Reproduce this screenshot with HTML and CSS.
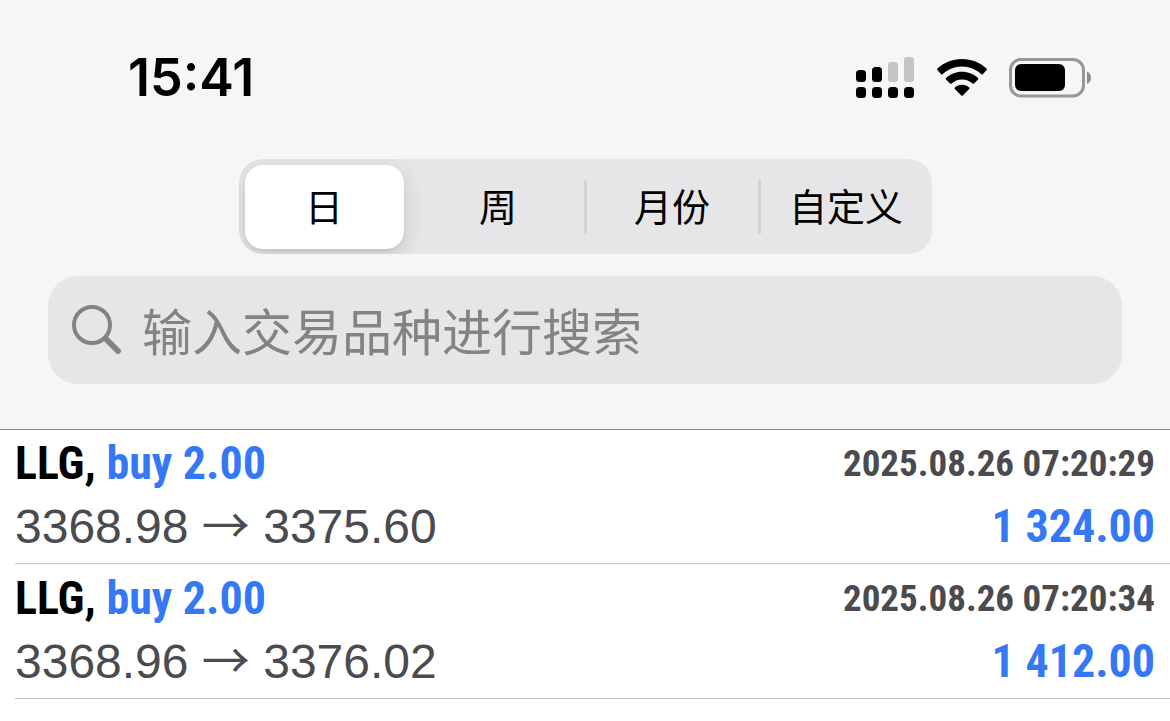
FILE: index.html
```html
<!DOCTYPE html>
<html lang="zh-CN">
<head>
<meta charset="utf-8">
<meta name="viewport" content="width=device-width, initial-scale=1">
<title>LLG</title>
<link rel="stylesheet" href="styles.css">
</head>
<body>
<header class="header">
  <div class="status">
    <time class="clock">15:41</time>
    <div class="status-icons">
      <svg class="signal" width="58" height="42" viewBox="0 0 58 42" aria-hidden="true">
        <rect x="0" y="13" width="10" height="12" rx="3.5"/>
        <rect x="16" y="10" width="10" height="15" rx="3.5"/>
        <rect class="signal-off" x="32" y="5" width="10" height="20" rx="3"/>
        <rect class="signal-off" x="48" y="0" width="10" height="25" rx="3"/>
        <rect x="0" y="30" width="10" height="11" rx="3.5"/>
        <rect x="16" y="30" width="10" height="11" rx="3.5"/>
        <rect x="32" y="30" width="10" height="11" rx="3.5"/>
        <rect x="48" y="30" width="10" height="11" rx="3.5"/>
      </svg>
      <svg class="wifi" width="50" height="38" viewBox="0 0 50 38" aria-hidden="true">
        <path d="M25 0C15.500 0 6.800 3.700 .4 9.600C0 10 0 10.600 .3 11L4.200 15.200C4.600 15.600 5.200 15.600 5.600 15.200C10.700 10.500 17.500 7.600 25 7.600S39.300 10.500 44.400 15.200C44.800 15.600 45.400 15.600 45.800 15.200L49.700 11C50 10.600 50 10 49.600 9.600C43.200 3.700 34.500 0 25 0Z"/>
        <path d="M25 12.800C18.800 12.800 13.200 15.200 9 19C8.600 19.400 8.600 20 9 20.400L13 24.500C13.400 24.900 14 24.900 14.400 24.500C17.200 22 20.900 20.400 25 20.400S32.800 22 35.600 24.500C36 24.900 36.600 24.900 37 24.500L41 20.400C41.400 20 41.400 19.400 41 19C36.800 15.200 31.200 12.800 25 12.800Z"/>
        <path d="M25 25.800C22.200 25.800 19.700 26.800 17.800 28.500C17.400 28.900 17.400 29.500 17.800 29.900L24.300 36.500C24.700 36.900 25.300 36.900 25.700 36.500L32.200 29.900C32.600 29.500 32.600 28.900 32.200 28.500C30.300 26.800 27.800 25.800 25 25.800Z"/>
      </svg>
      <svg class="battery" width="83" height="40" viewBox="0 0 83 40" aria-hidden="true">
        <rect class="battery-case" x="1.500" y="1.500" width="73" height="36.500" rx="10.500"/>
        <rect x="6" y="6" width="50" height="27" rx="6"/>
        <path class="battery-tip" d="M78 13.500C80.500 14.500 82 17 82 19.700S80.500 25 78 26Z"/>
      </svg>
    </div>
  </div>
  <div class="segments" role="group">
    <button class="segment segment-active" type="button" aria-pressed="true">日</button>
    <span class="divider divider-hidden"></span>
    <button class="segment" type="button" aria-pressed="false">周</button>
    <span class="divider"></span>
    <button class="segment" type="button" aria-pressed="false">月份</button>
    <span class="divider"></span>
    <button class="segment" type="button" aria-pressed="false">自定义</button>
  </div>
  <label class="search">
    <svg class="search-icon" width="50" height="50" viewBox="0 0 50 50" aria-hidden="true">
      <circle cx="20" cy="20" r="18"/>
      <path class="search-handle" d="M33.500 33.500L46 46"/>
    </svg>
    <input class="search-input" type="search" placeholder="输入交易品种进行搜索" aria-label="输入交易品种进行搜索">
  </label>
</header>
<main>
  <ul class="deals">
    <li class="deal">
      <div class="line"><span class="symbol">LLG, <span class="blue">buy 2.00</span></span><time class="date">2025.08.26 07:20:29</time></div>
      <div class="line"><span class="prices">3368.98 <span class="arrow">→</span> 3375.60</span><span class="profit">1 324.00</span></div>
    </li>
    <li class="deal">
      <div class="line"><span class="symbol">LLG, <span class="blue">buy 2.00</span></span><time class="date">2025.08.26 07:20:34</time></div>
      <div class="line"><span class="prices">3368.96 <span class="arrow">→</span> 3376.02</span><span class="profit">1 412.00</span></div>
    </li>
  </ul>
</main>
</body>
</html>
```
FILE: styles.css
```css
* {
  box-sizing: border-box;
}

body {
  margin: 0;
  background: #fff;
  color: #000;
  font-family: "Liberation Sans", "Noto Sans CJK SC", sans-serif;
}

.header {
  padding: 48px 48px 45px;
  background: #f6f6f6;
  border-bottom: 1px solid #8c8c8e;
}

.status {
  display: flex;
  align-items: center;
  justify-content: space-between;
  height: 60px;
  padding: 0 30px 0 80px;
}

.clock {
  font: 600 52px/60px Inter, sans-serif;
}

.status-icons {
  display: flex;
  align-items: center;
  gap: 22px;
}

.signal {
  margin-right: 1px;
}

.signal-off {
  fill: #c5c5c5;
}

.battery-case {
  fill: none;
  stroke: #979797;
  stroke-width: 3;
}

.battery-tip {
  fill: #8c8c8c;
}

.segments {
  display: flex;
  align-items: center;
  gap: 6px;
  max-width: 693px;
  margin: 51px auto 22px;
  padding: 6px 6px 5px;
  border-radius: 24px;
  background: #e6e6e8;
  overflow: hidden;
}

.segment {
  flex: 1 1 0;
  min-width: 0;
  height: 84px;
  padding: 0 0 4px;
  border: 0;
  border-radius: 18px;
  background: transparent;
  color: #000;
  font: 400 38px/80px "Noto Sans CJK SC", sans-serif;
  white-space: nowrap;
}

.segment-active {
  background: #fff;
  box-shadow: 0 6px 20px rgba(0, 0, 0, 0.14), 0 2px 3px rgba(0, 0, 0, 0.06);
}

.divider {
  width: 3px;
  height: 54px;
  border-radius: 2px;
  background: #d1d1d3;
}

.divider-hidden {
  visibility: hidden;
}

.search {
  display: flex;
  align-items: center;
  gap: 20px;
  height: 108px;
  padding: 0 24px;
  border-radius: 30px;
  background: #e6e6e8;
}

.search-icon {
  flex: none;
  fill: none;
  stroke: #838386;
  stroke-width: 4;
}

.search-handle {
  stroke-width: 6;
  stroke-linecap: round;
}

.search-input {
  flex: 1;
  min-width: 0;
  height: 80px;
  padding: 0 0 2px;
  border: 0;
  outline: 0;
  background: transparent;
  color: #000;
  font: 400 50px/78px "Noto Sans CJK SC", sans-serif;
}

.search-input::placeholder {
  color: #838386;
  opacity: 1;
}

.deals {
  margin: -1px 0 0;
  padding: 0 0 0 15px;
  list-style: none;
}

.deal {
  padding: 3px 0 5px;
  border-bottom: 1px solid #c4c4c6;
}

.line {
  display: flex;
  align-items: center;
  justify-content: space-between;
  height: 63px;
  padding-right: 15px;
  font-size: 48px;
  line-height: 63px;
  white-space: nowrap;
}

.symbol,
.date,
.profit {
  font-family: "Liberation Sans Narrow", "Roboto Condensed", "Open Sans Condensed", "Liberation Sans", sans-serif;
  font-weight: 700;
}

.symbol,
.profit {
  font-size: 46px;
}

.blue,
.profit {
  color: #3478f6;
}

.date {
  color: #4a4a4f;
  font-size: 37px;
}

.prices {
  color: #4a4a4f;
}

.arrow {
  font-family: "Noto Sans CJK SC", sans-serif;
  line-height: 1;
}
```
